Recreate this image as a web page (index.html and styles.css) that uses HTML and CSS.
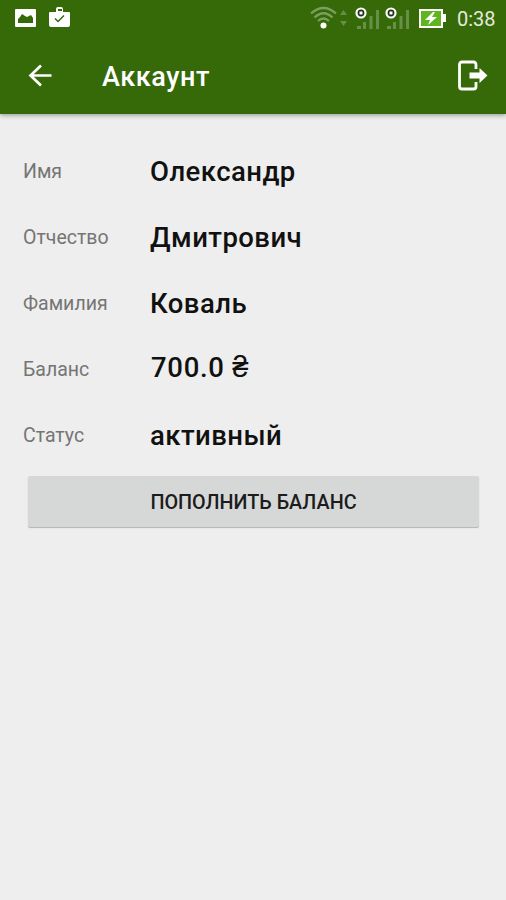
FILE: index.html
```html
<!DOCTYPE html>
<html lang="ru">
<head>
<meta charset="utf-8">
<title>Аккаунт</title>
<link rel="stylesheet" href="styles.css">
</head>
<body>

    <header class="header">
        <div class="status">
            <svg class="notifications" width="72" height="36" viewBox="0 0 72 36">
                <path fill="#fff" fill-rule="evenodd" d="M16 9h19q1 0 1 1v16q0 1-1 1H16q-1 0-1-1V10q0-1 1-1zM18 23h15v-5l-2-3-2 1-2 1-2-1-3-2-2 3-2 2z"/>
                <path fill="#fff" fill-rule="evenodd" d="M56 12V9q0-2 2-2h3q2 0 2 2v3h6q1 0 1 1v12q0 2-2 2H51q-2 0-2-2V13q0-1 1-1zM58 11h4V9h-4z"/>
                <path fill="none" stroke="#366a09" stroke-width="1.5" d="M55 18.500l3 3 6-6"/>
            </svg>
            <svg class="signals" width="150" height="36" viewBox="300 0 150 36">
                <g fill="none" stroke="#7b9f5e" stroke-width="2.300">
                    <path d="M311 13.500Q323.500 2.500 336 13.500"/>
                    <path d="M314.500 17.500Q323.500 9 332.500 17.500"/>
                    <path d="M318 21Q323.500 16 329 21"/>
                </g>
                <circle cx="323.500" cy="25.500" r="3" fill="#fff"/>
                <path fill="#688f48" d="M340 15l3.500-5 3.500 5zM340 21h7l-3.500 5z"/>
                <g fill="#688f48">
                    <path d="M357 26h4v3h-4zM363 22h3v7h-3zM369.500 16h3v13h-3zM376 10h3v19h-3z"/>
                    <path d="M387 26h4v3h-4zM393 22h3v7h-3zM399.500 16h3v13h-3zM406 10h3v19h-3z"/>
                </g>
                <circle cx="361" cy="13" r="4.500" fill="#222d1a" stroke="#fff" stroke-width="2.200"/>
                <circle cx="391" cy="13" r="4.500" fill="#222d1a" stroke="#fff" stroke-width="2.200"/>
                <path fill="#fff" d="M359.500 11.500h3v3h-3zM389.500 11.500h3v3h-3z"/>
                <path fill="#fff" d="M419 9h24v5h3v8h-3v6h-24z"/>
                <path fill="#5fb51f" d="M421 11h20v15h-20z"/>
                <path fill="#fff" d="M433 12l-8 8h5l-2 5 9-8h-5l3-5z"/>
            </svg>
            <span class="clock">0:38</span>
        </div>
        <div class="toolbar">
            <svg width="24" height="24" viewBox="0 0 24 24" fill="none" stroke="#fff" stroke-width="2.700">
                <path d="M23.500 11.500H2.500M13 1.500L2.500 11.500L13 21.500"/>
            </svg>
            <h1>Аккаунт</h1>
            <svg class="logout" width="31" height="32" viewBox="0 0 31 32">
                <path fill="none" stroke="#fff" stroke-width="2.800" d="M19 9V4.500q0-2.500-2.500-2.500H5Q2.500 2 2.500 4.500v22Q2.500 29 5 29h11.500q2.500 0 2.500-2.500V22"/>
                <path fill="#fff" d="M12.500 12.500h10V8l8 7.500-8 7.500V18.500h-10z"/>
            </svg>
        </div>
    </header>

    <main>
        <dl class="account">
            <div class="row"><dt>Имя</dt><dd>Олександр</dd></div>
            <div class="row"><dt>Отчество</dt><dd>Дмитрович</dd></div>
            <div class="row"><dt>Фамилия</dt><dd>Коваль</dd></div>
            <div class="row"><dt>Баланс</dt><dd class="balance">700.0 <span class="currency">₴</span></dd></div>
            <div class="row"><dt>Статус</dt><dd>активный</dd></div>
        </dl>
        <button class="refill">ПОПОЛНИТЬ БАЛАНС</button>
    </main>

</body>
</html>
```

FILE: styles.css
```css
body {
  margin: 0;
  min-height: 900px;
  background-color: #eeeeee;
  color: #111111;
  font-family: Roboto, "Noto Sans", sans-serif;
}
.header {
  height: 114px;
  background-color: #366a09;
  color: white;
  box-shadow: 0 1px 5px rgba(0, 0, 0, 0.4);
}
.status {
  display: flex;
  height: 38px;
}
.signals {
  margin-left: auto;
}
.clock {
  width: 49px;
  padding-left: 7px;
  color: #e3eadc;
  font-size: 20px;
  line-height: 38px;
}
.toolbar {
  display: flex;
  align-items: center;
  height: 75px;
  padding: 0 18px 0 28px;
}
.toolbar h1 {
  margin: 3px 0 0 50px;
  font-size: 27px;
  font-weight: 500;
  letter-spacing: 0.6px;
}
.logout {
  margin-left: auto;
}
.account {
  margin: 0;
  padding: 24px 23px 0;
}
.row {
  display: flex;
  height: 66px;
  line-height: 66px;
}
dt {
  width: 127px;
  padding-top: 1px;
  color: #757575;
  font-size: 19.5px;
}
dd {
  margin: 0;
  padding-top: 1px;
  font-size: 27.5px;
  font-weight: 500;
  letter-spacing: 0.45px;
}
.balance {
  padding-left: 1px;
  line-height: 62px;
  letter-spacing: 0.7px;
}
.currency {
  font-family: "Liberation Sans", sans-serif;
  font-size: 29px;
  line-height: 1;
}
.refill {
  display: block;
  width: 451px;
  height: 51px;
  margin: 8px 0 0 28px;
  padding: 2px 0 0;
  border: none;
  border-radius: 2px;
  background-color: #d6d8d7;
  box-shadow: 0 1px 1px rgba(0, 0, 0, 0.25);
  color: #1c1c1c;
  font-family: inherit;
  font-size: 19.8px;
  font-weight: 500;
}
```
